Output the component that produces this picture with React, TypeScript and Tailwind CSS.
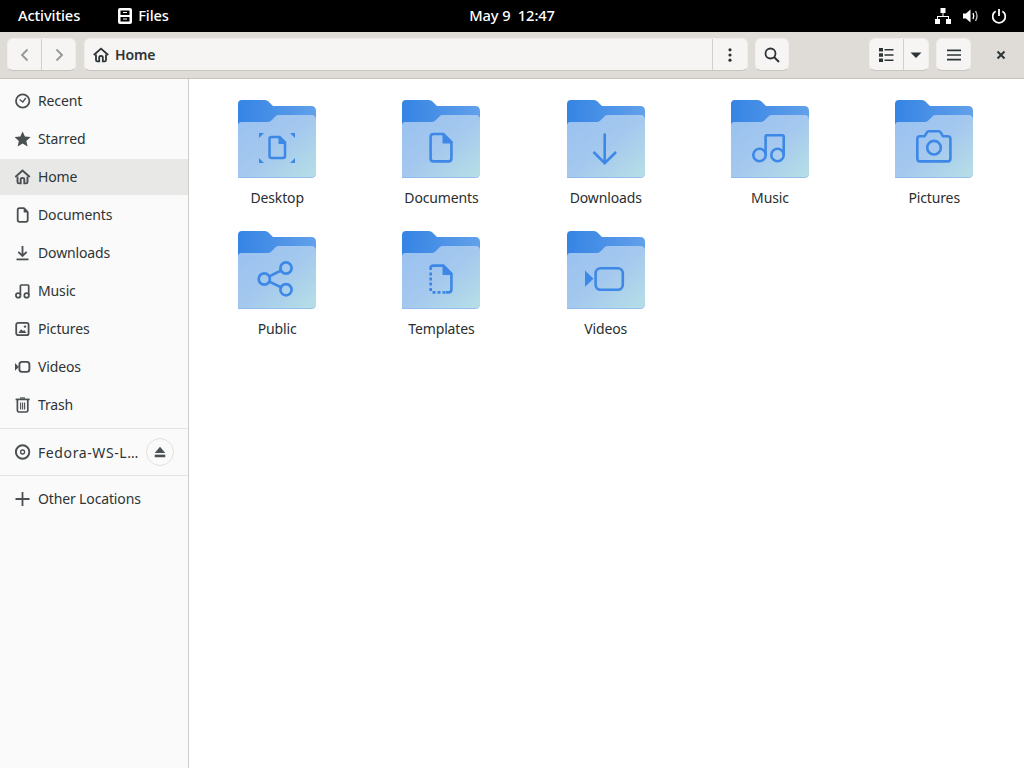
import React from "react";

const font = { fontFamily: '"Noto Sans", sans-serif' };

function Ico({ children, size = 16, className = "" }: { children: React.ReactNode; size?: number; className?: string }) {
  return (
    <svg width={size} height={size} viewBox="0 0 16 16" fill="none" className={"shrink-0 " + className}>
      {children}
    </svg>
  );
}

const S = "#4a4f51";
const sideIcons: Record<string, React.ReactNode> = {
  Recent: (
    <Ico>
      <circle cx="7.7" cy="8" r="6.7" stroke={S} strokeWidth="1.8" />
      <path d="M4.6 6.4 L7.8 9 L10.8 5" stroke={S} strokeWidth="1.3" />
    </Ico>
  ),
  Starred: (
    <Ico>
      <path d="M7.6 .4 L9.9 5.6 L15.6 6.1 L11.3 9.9 L12.6 15.5 L7.6 12.5 L2.6 15.5 L3.9 9.9 L-.4 6.1 L5.3 5.6 Z" fill={S} />
    </Ico>
  ),
  Home: (
    <Ico>
      <path d="M.2 8 L7.5 1.5 L14.8 8" stroke={S} strokeWidth="1.9" />
      <path d="M2.5 7.5 V13 Q2.5 14.4 3.9 14.4 H5.7 V10 Q5.7 9 7.5 9 Q9.3 9 9.3 10 V14.4 H11.1 Q12.5 14.4 12.5 13 V7.5" stroke={S} strokeWidth="1.9" />
    </Ico>
  ),
  Documents: (
    <Ico>
      <path d="M2.7 3 Q2.7 1.2 4.5 1.2 H8.9 L12.7 5 V13 Q12.7 14.8 10.9 14.8 H4.5 Q2.7 14.8 2.7 13 Z" stroke={S} strokeWidth="1.8" />
      <path d="M8.7 1 H9.7 L12.9 4.2 V5.4 H8.7 Z" fill={S} />
    </Ico>
  ),
  Downloads: (
    <Ico>
      <path d="M7.5 1 V11 M3.3 6.8 L7.5 11 L11.7 6.8" stroke={S} strokeWidth="1.8" />
      <path d="M1.5 14.4 H13.5" stroke={S} strokeWidth="1.8" />
    </Ico>
  ),
  Music: (
    <Ico>
      <circle cx="3.2" cy="12.4" r="2.3" stroke={S} strokeWidth="1.7" />
      <circle cx="11.6" cy="12.4" r="2.3" stroke={S} strokeWidth="1.7" />
      <path d="M5.4 12 V3 Q5.4 2 6.4 2 H13 Q13.7 2 13.7 3 V12" stroke={S} strokeWidth="1.7" />
    </Ico>
  ),
  Pictures: (
    <Ico>
      <rect x="1.2" y="1.8" width="12.4" height="12.4" rx="2" stroke={S} strokeWidth="1.8" />
      <path d="M3.4 12 L6.1 8.2 L8 10 L9.2 9 L11.4 12 Z" fill={S} />
      <circle cx="10" cy="5.6" r="1.2" fill={S} />
    </Ico>
  ),
  Videos: (
    <Ico>
      <rect x="4.4" y="2.9" width="10" height="10" rx="2.6" stroke={S} strokeWidth="1.9" />
      <path d="M-.6 3.5 L3.8 7.9 L-.6 12.4 Z" fill={S} />
    </Ico>
  ),
  Trash: (
    <Ico>
      <path d="M.6 2.4 H14.6" stroke={S} strokeWidth="1.7" />
      <path d="M2.4 3 V13.4 Q2.4 15 4 15 H11.2 Q12.8 15 12.8 13.4 V3" stroke={S} strokeWidth="1.7" />
      <path d="M5.6 5.6 V12.4 M7.6 5.6 V12.4 M9.6 5.6 V12.4" stroke={S} strokeWidth="1.1" />
      <path d="M5 1 H10" stroke={S} strokeWidth="1.3" />
    </Ico>
  ),
  Fedora: (
    <Ico>
      <circle cx="7.6" cy="8" r="6.7" stroke={S} strokeWidth="1.9" />
      <circle cx="7.6" cy="8" r="2" stroke={S} strokeWidth="1.3" />
    </Ico>
  ),
  Other: (
    <Ico>
      <path d="M7.5 1 V15 M.5 8 H14.5" stroke={S} strokeWidth="1.8" />
    </Ico>
  ),
};

const G = "#3d88e6";
const glyphs: Record<string, React.ReactNode> = {
  Desktop: (
    <g>
      <path d="M31.5 39 Q31.5 37 33.5 37 H41.5 L47 42.5 V56 Q47 58 45 58 H33.5 Q31.5 58 31.5 56 Z" stroke={G} strokeWidth="2.5" fill="none" />
      <path d="M40.5 36 H42 L48 42 V44 H40.5 Z" fill={G} />
      <path d="M21 33 H26 L21 38 Z M57 33 H52 L57 38 Z M21 63 H26 L21 58 Z M57 63 H52 L57 58 Z" fill={G} />
    </g>
  ),
  Documents: (
    <g>
      <path d="M28.6 37 Q28.6 34 31.6 34 H41 L49.4 42.4 V58.4 Q49.4 61.4 46.4 61.4 H31.6 Q28.6 61.4 28.6 58.4 Z" stroke={G} strokeWidth="2.6" fill="none" />
      <path d="M40.5 33 H42 L50.5 41.5 V43.5 H40.5 Z" fill={G} />
    </g>
  ),
  Downloads: <path d="M37.7 33.5 V63 M26.5 52 L37.7 63.2 L49 52" stroke={G} strokeWidth="2.6" fill="none" />,
  Music: (
    <g stroke={G} strokeWidth="2.6" fill="none">
      <circle cx="28.5" cy="55" r="6.2" />
      <circle cx="46.5" cy="55" r="6.2" />
      <path d="M34.6 55 V36.5 Q34.6 35.2 36 35.2 H51.4 Q52.7 35.2 52.7 36.5 V55" />
    </g>
  ),
  Pictures: (
    <g stroke={G} strokeWidth="2.6" fill="none">
      <path d="M22.3 39 Q22.3 36.3 25 36.3 H29.5 L31.8 32.7 Q32.5 31.3 34 31.3 H43.5 Q45 31.3 45.8 32.7 L48 36.3 H52.5 Q55.4 36.3 55.4 39 V58.5 Q55.4 61.4 52.5 61.4 H25 Q22.3 61.4 22.3 58.5 Z" />
      <circle cx="39" cy="47.7" r="6.8" />
    </g>
  ),
  Public: (
    <g stroke={G} strokeWidth="2.7" fill="none">
      <circle cx="26.3" cy="48" r="5.6" />
      <circle cx="48" cy="37" r="5.6" />
      <circle cx="48" cy="58.7" r="5.6" />
      <path d="M31.3 45.4 L43 39.5 M31.3 50.6 L43 56.2" />
    </g>
  ),
  Templates: (
    <g>
      <path d="M28.6 39 V37 Q28.6 34.6 31.6 34.6 H41 L49.4 43 V58.4 Q49.4 61.4 46.4 61.4 H44" stroke={G} strokeWidth="2.6" fill="none" />
      <path d="M40.5 33.5 H42 L50.5 42 V44 H40.5 Z" fill={G} />
      <path d="M27.3 41.5 H30 V44.5 H27.3 Z M27.3 46.5 H30 V49.5 H27.3 Z M27.3 51.5 H30 V54.5 H27.3 Z M27.3 57 H30 V60 H27.3 Z M30.5 60 H33.5 V62.7 H30.5 Z M35.5 60 H38.5 V62.7 H35.5 Z M40.5 60 H43.5 V62.7 H40.5 Z" fill={G} />
    </g>
  ),
  Videos: (
    <g>
      <rect x="28.6" y="37.3" width="27.2" height="21.4" rx="5" stroke={G} strokeWidth="2.6" fill="none" />
      <path d="M18 39.5 L26.5 47.7 L18 55.8 Z" fill={G} />
    </g>
  ),
};

function Folder({ name }: { name: string }) {
  return (
    <svg width="78" height="78" viewBox="0 0 78 78">
      <defs>
        <linearGradient id={"b" + name} x1="0" y1="0" x2="1" y2="0">
          <stop offset="0" stopColor="#3584e4" />
          <stop offset="1" stopColor="#62a0ea" />
        </linearGradient>
        <linearGradient id={"f" + name} x1="0" y1="0" x2="1" y2="1">
          <stop offset="0" stopColor="#99c1f1" />
          <stop offset="0.5" stopColor="#a4c8ee" />
          <stop offset="1" stopColor="#b7dfe6" />
        </linearGradient>
      </defs>
      <path d="M0 30 V4 Q0 0 4 0 H27 Q29 0 30.5 1.5 L35 6 H73 Q78 6 78 11 V40 H0 Z" fill={`url(#b${name})`} />
      <path d="M0 26 Q0 22 4 22 H30 Q32 22 33.5 20.5 L37 17 Q38.5 15 41 15 H73 Q78 15 78 20 V73 Q78 78 73 78 H0 Z" fill="#8ab6ee" />
      <path d="M0 26 Q0 22 4 22 H30 Q32 22 33.5 20.5 L37 17 Q38.5 15 41 15 H73 Q78 15 78 20 V72.5 Q78 77.3 73 77.3 H0 Z" fill={`url(#f${name})`} />
      {glyphs[name]}
    </svg>
  );
}

const label = "text-[14px] leading-5 text-[#2e3436] tracking-[-0.14px]";

function Row({ icon, text, active }: { icon: string; text: string; active?: boolean }) {
  return (
    <div className={"flex items-center h-[36px] mt-[2px] pl-[15px] gap-[7px] " + (active ? "bg-[#e8e8e7]" : "")}>
      {sideIcons[icon]}
      <span className={label}>{text}</span>
    </div>
  );
}

const btn =
  "flex items-center justify-center h-[33px] rounded-[6px] border border-[#f0eeec] border-b-[#c9c5c0] bg-[#f6f5f4]";
const D = "#2e3436";

export default function App() {
  const items = ["Desktop", "Documents", "Downloads", "Music", "Pictures", "Public", "Templates", "Videos"];
  return (
    <div className="w-[1024px] h-[768px] flex flex-col overflow-hidden bg-white" style={font}>
      <div className="h-[32px] bg-black text-white flex items-center shrink-0 text-[14.67px] font-medium tracking-[-0.1px]">
        <div className="w-[381px] flex items-center pl-[18px]">
          <span className="pb-[2px]">Activities</span>
          <svg width="14" height="16" viewBox="0 0 14 16" className="ml-[38px]">
            <rect x="0" y="0" width="14" height="16" rx="2" fill="#fff" />
            <path d="M2.5 2.5 H11.5 V7 H2.5 Z M2.5 9 H11.5 V13.5 H2.5 Z" fill="#000" />
            <path d="M5 4 H9 V5 H5 Z M5 10.5 H9 V11.5 H5 Z" fill="#fff" />
          </svg>
          <span className="ml-[6px] pb-[2px]">Files</span>
        </div>
        <div className="w-[262px] text-center pb-[2px]">May 9&nbsp;&nbsp;12:47</div>
        <div className="flex-1 flex items-center justify-end pr-[17px] gap-[12px]">
          <svg width="16" height="16" viewBox="0 0 16 16">
            <path d="M5.5 0 H10.5 V5 H5.5 Z M0 11 H5 V16 H0 Z M11 11 H16 V16 H11 Z M2 8 H14 V11 H13 V9 H3 V11 H2 Z M7.5 5 H8.5 V8 H7.5 Z" fill="#fff" />
          </svg>
          <svg width="16" height="16" viewBox="0 0 16 16" fill="none">
            <path d="M0 5.5 H3 L7.5 1.5 V14.5 L3 10.5 H0 Z" fill="#fff" />
            <path d="M10 5 Q11.5 8 10 11" stroke="#fff" strokeWidth="1.4" />
            <path d="M12.5 3 Q15.5 8 12.5 13" stroke="#bbb" strokeWidth="1.4" />
          </svg>
          <svg width="16" height="16" viewBox="0 0 16 16" fill="none">
            <path d="M8 1 V8" stroke="#fff" strokeWidth="1.8" />
            <path d="M4.6 3.2 A6.3 6.3 0 1 0 11.4 3.2" stroke="#fff" strokeWidth="1.7" />
          </svg>
        </div>
      </div>

      <div className="h-[47px] shrink-0 bg-[#dfdcd8] border-b border-[#c7c3be] flex items-center pl-[7px] pb-[1px]">
        <div className={btn + " w-[69px]"}>
          <div className="flex-1 h-full flex items-center justify-center border-r border-[#d3cfca]">
            <Ico><path d="M10.5 2.5 L5 8 L10.5 13.5" stroke="#92979a" strokeWidth="1.8" /></Ico>
          </div>
          <div className="flex-1 flex items-center justify-center">
            <Ico><path d="M5.5 2.5 L11 8 L5.5 13.5" stroke="#92979a" strokeWidth="1.8" /></Ico>
          </div>
        </div>
        <div className={btn + " w-[664px] ml-[8px] justify-start"}>
          <div className="flex-1 flex items-center pl-[8px] gap-[6px]">
            <Ico>
              <path d="M.8 8 L8 1.6 L15.2 8" stroke={D} strokeWidth="1.8" />
              <path d="M3 7.5 V13 Q3 14.4 4.4 14.4 H6.2 V10 Q6.2 9 8 9 Q9.8 9 9.8 10 V14.4 H11.6 Q13 14.4 13 13 V7.5" stroke={D} strokeWidth="1.8" />
            </Ico>
            <span className="text-[14px] font-semibold text-[#2e3436] leading-5 tracking-[-0.1px]">Home</span>
          </div>
          <div className="w-[35px] h-full flex items-center justify-center border-l border-[#d3cfca]">
            <Ico>
              <circle cx="8" cy="2.8" r="1.6" fill={D} />
              <circle cx="8" cy="8" r="1.6" fill={D} />
              <circle cx="8" cy="13.2" r="1.6" fill={D} />
            </Ico>
          </div>
        </div>
        <div className={btn + " w-[34px] ml-[7px]"}>
          <Ico>
            <circle cx="6.5" cy="6.5" r="5" stroke={D} strokeWidth="1.8" />
            <path d="M10 10 L15 15" stroke={D} strokeWidth="2" />
          </Ico>
        </div>
        <div className={btn + " w-[60px] ml-[80px]"}>
          <div className="w-[34px] h-full flex items-center justify-center border-r border-[#d3cfca]">
            <Ico>
              <path d="M0 1 H4 V4.6 H0 Z M0 6.2 H4 V9.8 H0 Z M0 11.4 H4 V15 H0 Z" fill={D} />
              <path d="M5.5 2 H14.5 V3.6 H5.5 Z M5.5 7.2 H14.5 V8.8 H5.5 Z M5.5 12.4 H14.5 V14 H5.5 Z" fill={D} />
            </Ico>
          </div>
          <div className="flex-1 flex items-center justify-center">
            <Ico><path d="M2.5 5.5 H13.5 L8 11 Z" fill={D} /></Ico>
          </div>
        </div>
        <div className={btn + " w-[35px] ml-[7px]"}>
          <Ico><path d="M1 2.6 H15 V4.2 H1 Z M1 7.2 H15 V8.8 H1 Z M1 11.8 H15 V13.4 H1 Z" fill={D} /></Ico>
        </div>
        <div className="w-[16px] ml-[22px] flex justify-center">
          <Ico><path d="M4.5 4.5 L11.5 11.5 M11.5 4.5 L4.5 11.5" stroke={D} strokeWidth="2" /></Ico>
        </div>
      </div>

      <div className="flex-1 flex min-h-0">
        <div className="w-[189px] shrink-0 bg-[#fafafa] border-r border-[#cfcbc6] pt-[2px] flex flex-col">
          <Row icon="Recent" text="Recent" />
          <Row icon="Starred" text="Starred" />
          <Row icon="Home" text="Home" active />
          <Row icon="Documents" text="Documents" />
          <Row icon="Downloads" text="Downloads" />
          <Row icon="Music" text="Music" />
          <Row icon="Pictures" text="Pictures" />
          <Row icon="Videos" text="Videos" />
          <Row icon="Trash" text="Trash" />
          <div className="h-px bg-[#e3e2e0] mt-[5px]" />
          <div className="flex items-center h-[36px] mt-[5px] pl-[15px] pr-[14px] gap-[7px]">
            {sideIcons.Fedora}
            <span className="flex-1 whitespace-nowrap text-[14px] leading-5 pt-[1px] text-[#2e3436] tracking-[0.6px]">Fedora-WS-L…</span>
            <div className="w-[28px] h-[28px] rounded-full border border-[#e4e2df] bg-[#fafafa] flex items-center justify-center">
              <Ico size={14}>
                <path d="M8 2 L14 9 H2 Z" fill={S} />
                <path d="M2 11 H14 V14 H2 Z" fill={S} />
              </Ico>
            </div>
          </div>
          <div className="h-px bg-[#e3e2e0] mt-[5px]" />
          <div className="flex items-center h-[36px] mt-[5px] pl-[15px] gap-[7px]">
            {sideIcons.Other}
            <span className={label}>Other Locations</span>
          </div>
        </div>

        <div className="flex-1 min-w-0 pt-[21px] pl-[6.08px]">
          <div className="grid grid-cols-5 w-[821.25px] auto-rows-[131px]">
            {items.map((n) => (
              <div key={n} className="flex flex-col items-center">
                <Folder name={n} />
                <span className="mt-[10px] text-[14px] leading-5 text-[#2a2e30] tracking-[-0.14px]">{n}</span>
              </div>
            ))}
          </div>
        </div>
      </div>
    </div>
  );
}
